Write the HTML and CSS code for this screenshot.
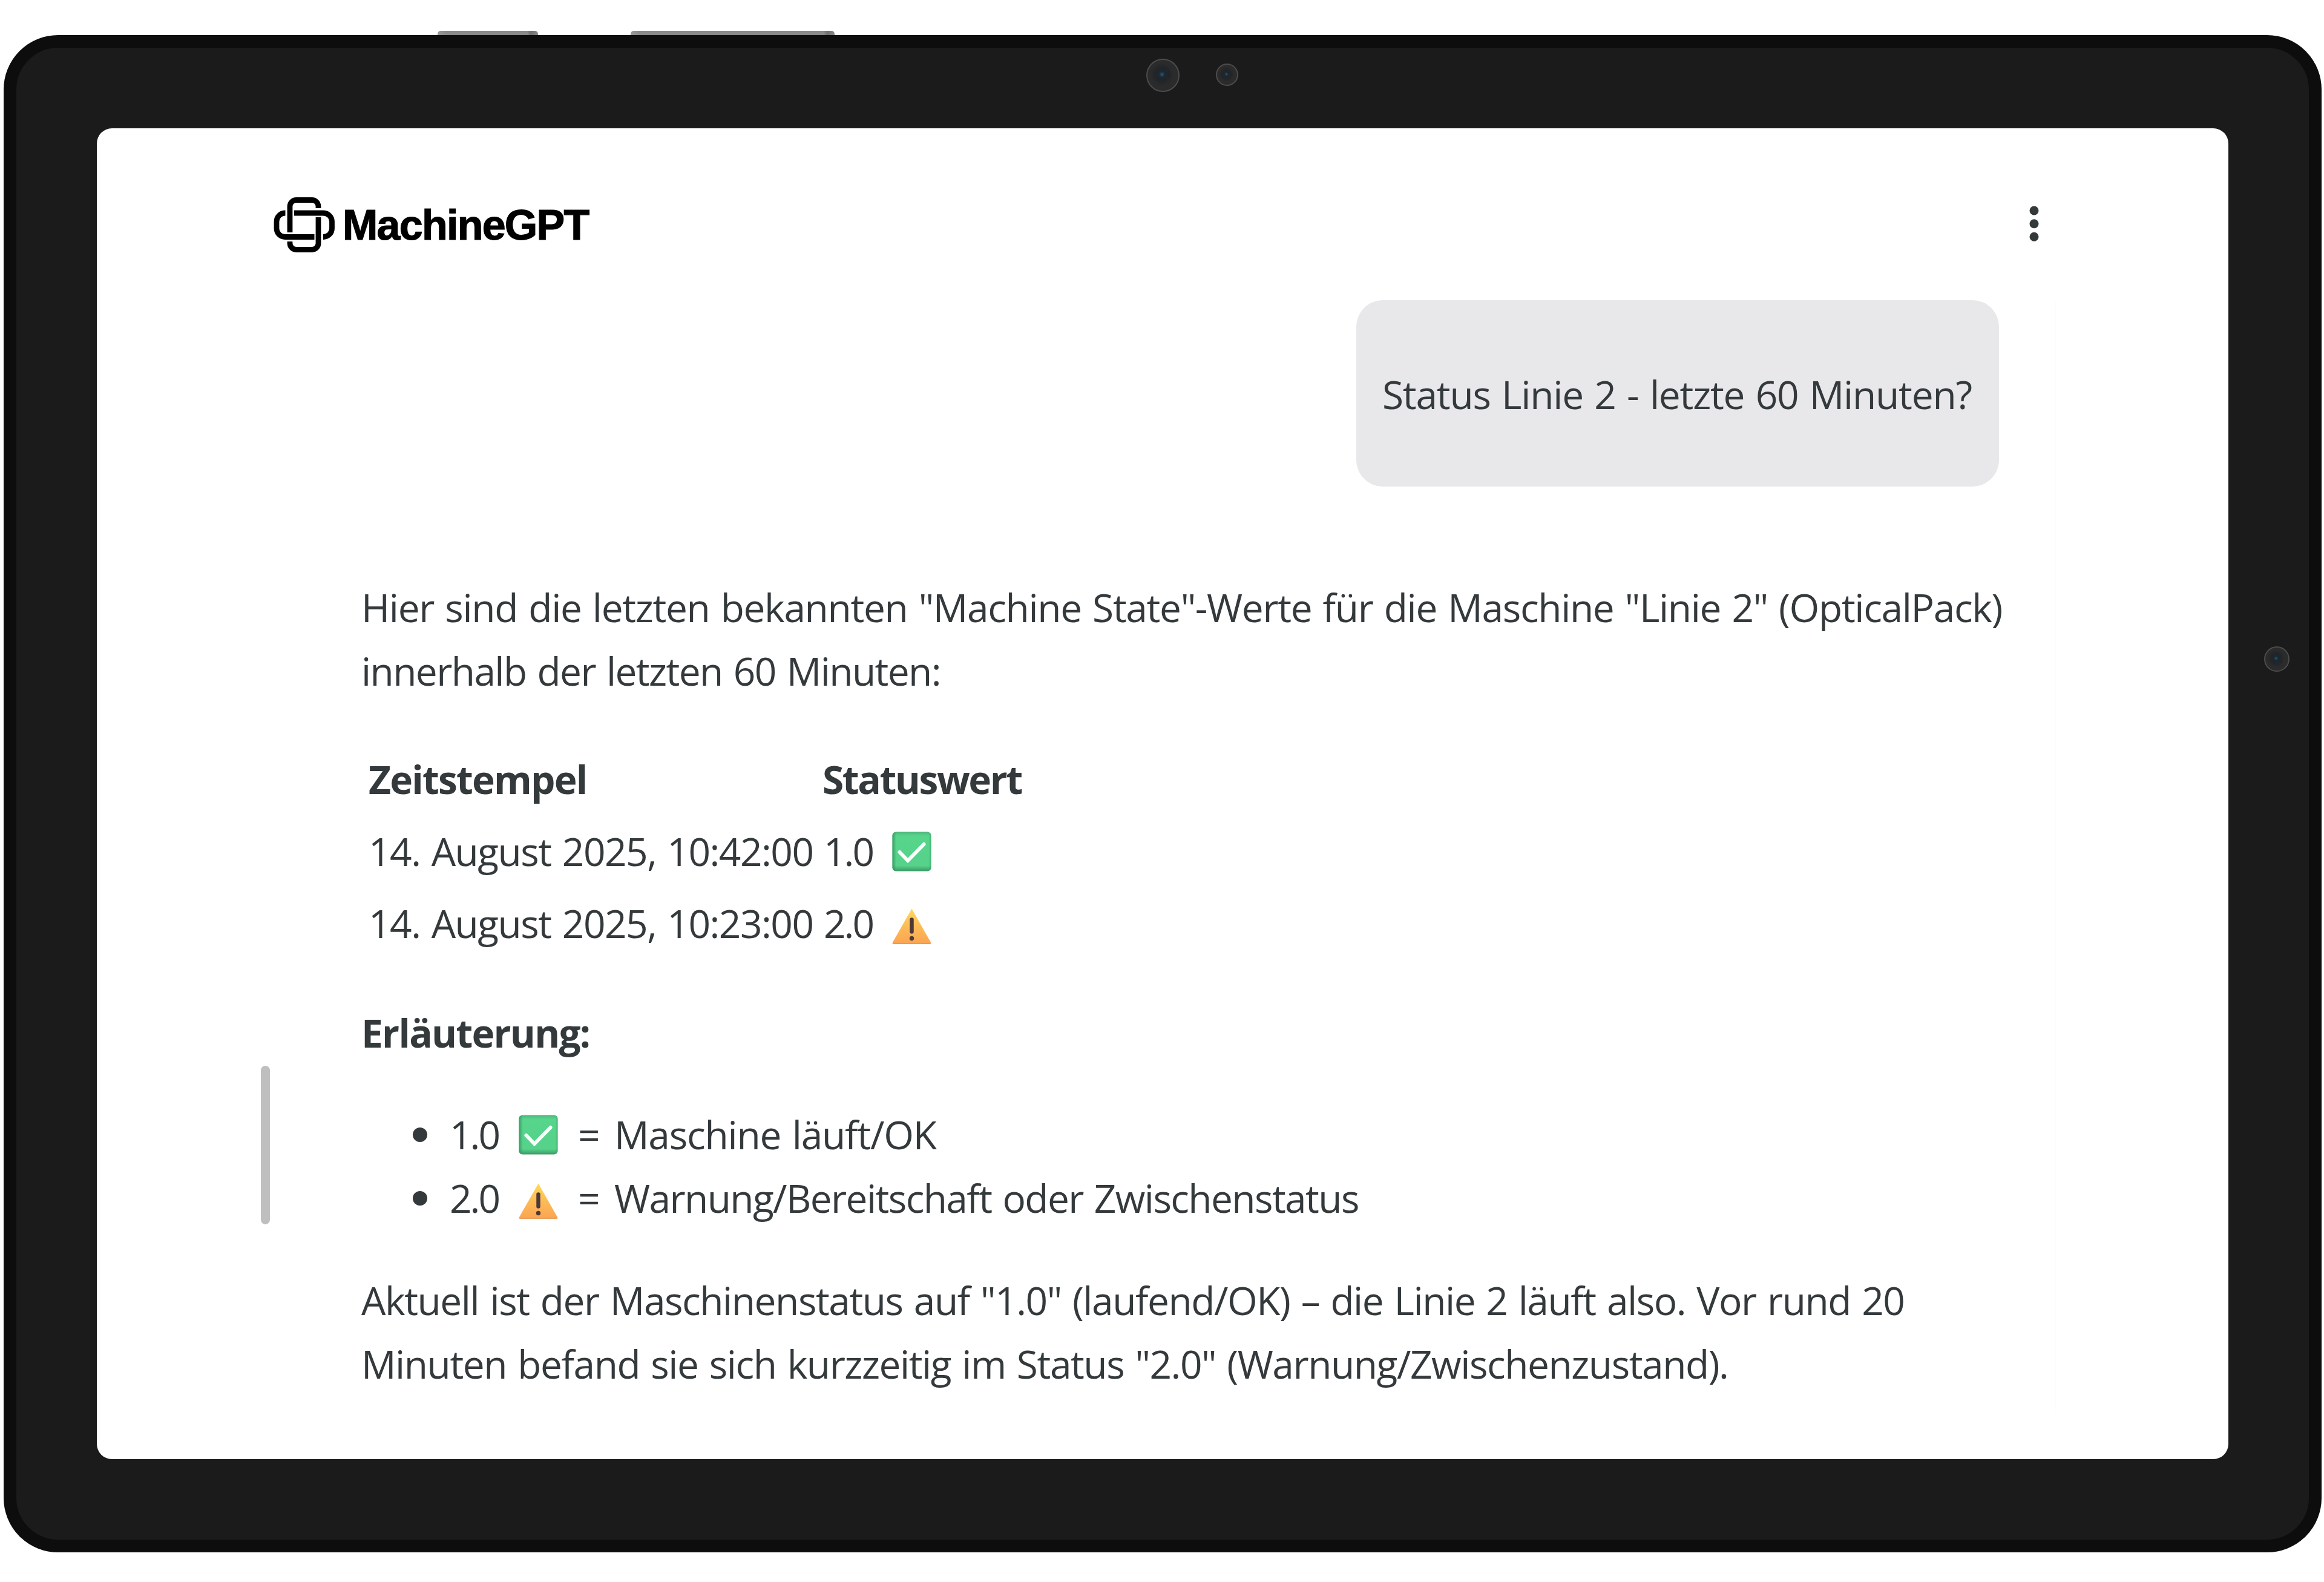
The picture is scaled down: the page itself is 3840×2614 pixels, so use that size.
FILE: index.html
```html
<!DOCTYPE html>
<html lang="de">
<head>
<meta charset="utf-8">
<title>MachineGPT</title>
<link rel="stylesheet" href="styles.css">
</head>
<body>
<svg class="defs" width="0" height="0" aria-hidden="true">
  <defs>
    <linearGradient id="green" x1="0" y1="0" x2="0" y2="1"><stop offset="0" stop-color="#4fb57b"/><stop offset=".1" stop-color="#56d58b"/><stop offset=".86" stop-color="#56d28a"/><stop offset="1" stop-color="#3b9a66"/></linearGradient>
    <linearGradient id="edge" x1="0" y1="0" x2="1" y2="0"><stop offset="0" stop-color="#2f8a58" stop-opacity=".75"/><stop offset=".1" stop-color="#2f8a58" stop-opacity="0"/><stop offset=".94" stop-color="#2f8a58" stop-opacity="0"/><stop offset="1" stop-color="#2f8a58" stop-opacity=".45"/></linearGradient>
    <linearGradient id="amber" x1="0" y1="0" x2="0" y2="1"><stop offset="0" stop-color="#ffd95a"/><stop offset=".5" stop-color="#fcbc57"/><stop offset="1" stop-color="#fba453"/></linearGradient>
    <symbol id="check" viewBox="0 0 65 72">
      <rect x=".5" y="3.5" width="64" height="65" rx="6" fill="url(#green)"/>
      <rect x=".5" y="3.5" width="64" height="65" rx="6" fill="url(#edge)"/>
      <path d="M12.500 37 L26 51 L52.500 24" fill="none" stroke="#fff" stroke-width="6" stroke-linecap="round" stroke-linejoin="miter"/>
    </symbol>
    <symbol id="warn" viewBox="0 0 65 72">
      <path d="M32.500 11.500 L64.500 68 Q64.800 69.500 63 69.500 H2 Q.2 69.500 .5 68 Z" fill="url(#amber)"/>
      <path d="M1.500 69H63.500" stroke="#e2924a" stroke-width="1.500"/>
      <path d="M32.500 29.500V49.500" stroke="#4d3838" stroke-width="6.500" stroke-linecap="round"/>
      <circle cx="32.500" cy="60.500" r="3.700" fill="#4d3838"/>
    </symbol>
  </defs>
</svg>
<div class="device">
  <span class="key key-power"></span>
  <span class="key key-volume"></span>
  <span class="lens lens-main"></span>
  <span class="lens lens-small"></span>
  <span class="lens lens-side"></span>
  <div class="screen">
    <header class="topbar">
      <div class="brand">
        <svg width="102" height="91" viewBox="0 0 102 91" fill="none" stroke="#000" stroke-width="8.800">
          <path d="M27 58V15a10.500 10.500 0 0 1 10.500-10.500h26A10.500 10.500 0 0 1 74 15v3"/>
          <path d="M74 33v43a10.500 10.500 0 0 1-10.500 10.500h-26A10.500 10.500 0 0 1 27 76v-3"/>
          <path d="M34 26h48a14.500 14 0 0 1 14.500 14v11.500a14.500 14 0 0 1-14.500 14"/>
          <path d="M67.500 65.500H19a14 14 0 0 1-14-14V40a14 14 0 0 1 14-14h.5"/>
        </svg>
        <span class="brand-name">MachineGPT</span>
      </div>
      <svg class="menu" width="16" height="91" viewBox="0 0 16 91" fill="#34393c">
        <circle cx="8" cy="22" r="7.500"/><circle cx="8" cy="43.700" r="7.500"/><circle cx="8" cy="65.300" r="7.500"/>
      </svg>
    </header>
    <div class="content">
      <div class="scroll"><div class="thumb"></div></div>
      <main class="thread">
        <div class="bubble">Status Linie 2 - letzte 60 Minuten?</div>
        <article class="answer">
          <p class="intro">Hier sind die letzten bekannten "Machine State"-Werte für die Maschine "Linie 2" (OpticalPack)<br><span class="tight">innerhalb der letzten 60 Minuten:</span></p>
          <div class="table">
            <div class="row head"><span>Zeitstempel</span><span class="status-title">Statuswert</span></div>
            <div class="row"><span>14. August 2025, 10:42:00</span><span class="num">1.0</span><svg class="emoji"><use href="#check"/></svg></div>
            <div class="row"><span>14. August 2025, 10:23:00</span><span class="num">2.0</span><svg class="emoji"><use href="#warn"/></svg></div>
          </div>
          <p class="label">Erläuterung:</p>
          <ul class="legend">
            <li><i class="dot"></i><span class="num">1.0</span><svg class="emoji"><use href="#check"/></svg><span>=</span><span>Maschine läuft/OK</span></li>
            <li><i class="dot"></i><span class="num">2.0</span><svg class="emoji"><use href="#warn"/></svg><span>=</span><span class="tight">Warnung/Bereitschaft oder Zwischenstatus</span></li>
          </ul>
          <p class="summary">Aktuell ist der Maschinenstatus auf "1.0" (laufend/OK) – die Linie 2 läuft also. Vor rund 20<br>Minuten befand sie sich kurzzeitig im Status "2.0" (Warnung/Zwischenzustand).</p>
        </article>
      </main>
    </div>
  </div>
</div>
</body>
</html>
```
FILE: styles.css
```css
* { box-sizing: border-box; margin: 0; padding: 0; }
body {
  height: 2614px;
  padding: 58px 4px 49px 6px;
  overflow: hidden;
  background: #fff;
  color: #34393c;
  font: 64px/105px "Open Sans", "Noto Sans", sans-serif;
  word-spacing: 3px;
}
.defs { position: absolute; }

.device {
  position: relative;
  height: 2507px;
  padding: 133px;
  border: 21px solid #0d0d0d;
  border-radius: 90px;
  background: #1b1b1b;
}
.key {
  position: absolute;
  top: -28px;
  height: 7px;
  border-radius: 5px 5px 0 0;
  background: linear-gradient(90deg, #999, #8a8a8a 14px, #8a8a8a calc(100% - 18px), #707070 calc(100% - 12px), #888);
}
.key-power { left: 696px; width: 166px; }
.key-volume { left: 1015px; width: 337px; }
.lens {
  position: absolute;
  border: 2px solid #4c4c4c;
  border-radius: 50%;
  background: radial-gradient(circle at 47% 47%, #2f6a80 0, #1f3c4e 6%, #1d262e 14%, #222528 32%, #2b2b2b 50%);
}
.lens-main { left: 1867px; top: 18px; width: 55px; height: 55px; }
.lens-small { left: 1982px; top: 26px; width: 37px; height: 37px; }
.lens-side { left: 3714px; top: 989px; width: 42px; height: 42px; }

.screen {
  height: 100%;
  padding-top: 114px;
  border-radius: 25px;
  background: #fff;
}
.topbar {
  display: flex;
  justify-content: space-between;
  height: 91px;
  padding: 0 313px 0 292px;
}
.brand { display: flex; gap: 12px; }
.brand-name {
  color: #000;
  font: 700 70px/93px "Liberation Sans", Arial, sans-serif;
  letter-spacing: -1.75px;
  -webkit-text-stroke: 1.2px #000;
}

.content { display: flex; margin-top: 79px; }
.scroll { width: 437px; padding: 1265px 0 0 271px; }
.thumb { width: 15px; height: 262px; border-radius: 8px; background: #bfbfbf; }
.thread {
  width: 2800px;
  height: 1834px;
  border-right: 2px solid #fcfcfc;
  white-space: nowrap;
}
.bubble {
  width: 1062px;
  height: 308px;
  margin-left: 1644px;
  padding: 103px 43px;
  border-radius: 44px;
  background: #e8e8ea;
  letter-spacing: -1.22px;
}
.answer { padding-top: 147px; letter-spacing: -1.2px; }
.intro { letter-spacing: -1.34px; }
.summary { margin-top: 64px; letter-spacing: -1.45px; }

.table { margin-top: 67px; padding-left: 12px; line-height: 119px; }
.row {
  display: grid;
  grid-template-columns: 752px 113px 65px;
  align-items: center;
  height: 119px;
  letter-spacing: -1.5px;
}
.head { font-weight: 700; letter-spacing: -1.8px; }
.status-title { margin-left: -2px; letter-spacing: -2.4px; }
.num { letter-spacing: -3px; }
.emoji { display: block; width: 65px; height: 72px; }

.label { margin-top: 69px; font-weight: 700; letter-spacing: -1.75px; }
.legend { margin-top: 63px; padding-left: 85px; list-style: none; }
.legend li {
  display: grid;
  grid-template-columns: 61px 114px 98px 60px auto;
  align-items: center;
  height: 105px;
}
.dot { width: 24px; height: 24px; border-radius: 50%; background: currentColor; }
.tight { letter-spacing: -1.6px; }
```
